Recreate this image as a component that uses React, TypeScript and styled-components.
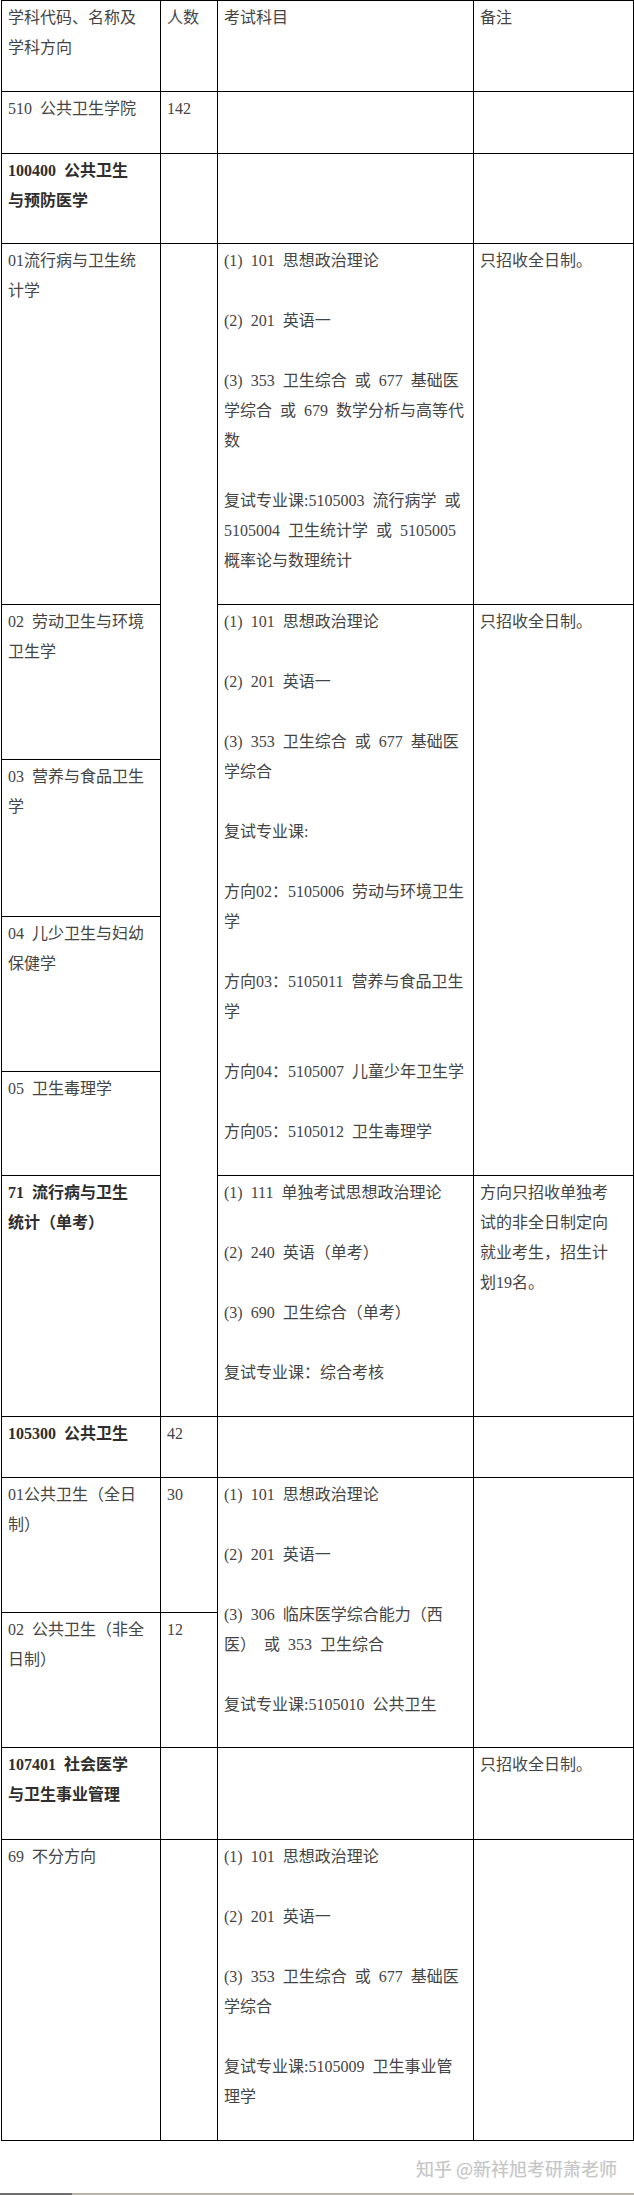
import React from 'react';
import styled, { createGlobalStyle } from 'styled-components';

const GlobalStyle = createGlobalStyle`
  html, body {
    margin: 0;
    padding: 0;
    background: #fff;
  }
  body {
    font-family: "Liberation Serif", "Noto Sans CJK SC", serif;
  }
`;

const Page = styled.div`
  width: 634px;
  height: 2195px;
  display: flex;
  flex-direction: column;
  overflow: hidden;
`;

const Table = styled.table`
  margin-left: 1px;
  width: 632px;
  border-collapse: collapse;
  table-layout: fixed;
  font-size: 16px;
  line-height: 30px;
  color: #444;
  word-spacing: 4px;
`;

const Row = styled.tr<{ $h: number }>`
  height: ${(p) => p.$h}px;
`;

const Cell = styled.td<{ $bold?: boolean }>`
  border: 1px solid #000;
  vertical-align: top;
  padding: 2px 2px 0 6px;
  white-space: pre;
  overflow: hidden;
  font-weight: ${(p) => (p.$bold ? 700 : 400)};
  color: ${(p) => (p.$bold ? '#2e2e2e' : '#444')};
`;

const Para = styled.p`
  margin: 0 0 30px;

  &:last-child {
    margin-bottom: 0;
  }
`;

const Footer = styled.div`
  flex: 1;
  display: flex;
  flex-direction: column;
  justify-content: flex-end;
`;

const Watermark = styled.div`
  align-self: flex-end;
  margin: 0 17px 13px 0;
  font-family: "Noto Sans CJK SC", sans-serif;
  font-size: 18px;
  line-height: 24px;
  color: #c6c6c6;
  text-shadow: 0 0 1px #e2e2e2;
`;

const BottomRule = styled.div`
  height: 2px;
  background: linear-gradient(to right, #6f6f6f 0 72px, #b9b4aa 72px 100%);
`;

type Paras = string[][];

const Text = ({ paras }: { paras: Paras }) => (
  <>
    {paras.map((lines, i) => (
      <Para key={i}>
        {lines.map((line, j) => (
          <React.Fragment key={j}>
            {j > 0 && <br />}
            {line}
          </React.Fragment>
        ))}
      </Para>
    ))}
  </>
);

const exam01: Paras = [
  ['(1) 101 思想政治理论'],
  ['(2) 201 英语一'],
  ['(3) 353 卫生综合 或 677 基础医', '学综合 或 679 数学分析与高等代', '数'],
  ['复试专业课:5105003 流行病学 或', '5105004 卫生统计学 或 5105005', '概率论与数理统计'],
];

const exam02: Paras = [
  ['(1) 101 思想政治理论'],
  ['(2) 201 英语一'],
  ['(3) 353 卫生综合 或 677 基础医', '学综合'],
  ['复试专业课:'],
  ['方向02：5105006 劳动与环境卫生', '学'],
  ['方向03：5105011 营养与食品卫生', '学'],
  ['方向04：5105007 儿童少年卫生学'],
  ['方向05：5105012 卫生毒理学'],
];

const exam71: Paras = [
  ['(1) 111 单独考试思想政治理论'],
  ['(2) 240 英语（单考）'],
  ['(3) 690 卫生综合（单考）'],
  ['复试专业课：综合考核'],
];

const examPublic: Paras = [
  ['(1) 101 思想政治理论'],
  ['(2) 201 英语一'],
  ['(3) 306 临床医学综合能力（西', '医） 或 353 卫生综合'],
  ['复试专业课:5105010 公共卫生'],
];

const exam69: Paras = [
  ['(1) 101 思想政治理论'],
  ['(2) 201 英语一'],
  ['(3) 353 卫生综合 或 677 基础医', '学综合'],
  ['复试专业课:5105009 卫生事业管', '理学'],
];

const FULL_TIME = [['只招收全日制。']];

export default function App() {
  return (
    <Page>
      <GlobalStyle />
      <Table>
        <colgroup>
          <col style={{ width: 159 }} />
          <col style={{ width: 57 }} />
          <col style={{ width: 256 }} />
          <col style={{ width: 160 }} />
        </colgroup>
        <tbody>
          <Row $h={91}>
            <Cell><Text paras={[['学科代码、名称及', '学科方向']]} /></Cell>
            <Cell><Text paras={[['人数']]} /></Cell>
            <Cell><Text paras={[['考试科目']]} /></Cell>
            <Cell><Text paras={[['备注']]} /></Cell>
          </Row>
          <Row $h={62}>
            <Cell><Text paras={[['510 公共卫生学院']]} /></Cell>
            <Cell><Text paras={[['142']]} /></Cell>
            <Cell />
            <Cell />
          </Row>
          <Row $h={90}>
            <Cell $bold><Text paras={[['100400 公共卫生', '与预防医学']]} /></Cell>
            <Cell />
            <Cell />
            <Cell />
          </Row>
          <Row $h={361}>
            <Cell><Text paras={[['01流行病与卫生统', '计学']]} /></Cell>
            <Cell rowSpan={6} />
            <Cell><Text paras={exam01} /></Cell>
            <Cell><Text paras={FULL_TIME} /></Cell>
          </Row>
          <Row $h={155}>
            <Cell><Text paras={[['02 劳动卫生与环境', '卫生学']]} /></Cell>
            <Cell rowSpan={4}><Text paras={exam02} /></Cell>
            <Cell rowSpan={4}><Text paras={FULL_TIME} /></Cell>
          </Row>
          <Row $h={157}>
            <Cell><Text paras={[['03 营养与食品卫生', '学']]} /></Cell>
          </Row>
          <Row $h={155}>
            <Cell><Text paras={[['04 儿少卫生与妇幼', '保健学']]} /></Cell>
          </Row>
          <Row $h={104}>
            <Cell><Text paras={[['05 卫生毒理学']]} /></Cell>
          </Row>
          <Row $h={241}>
            <Cell $bold><Text paras={[['71 流行病与卫生', '统计（单考）']]} /></Cell>
            <Cell><Text paras={exam71} /></Cell>
            <Cell>
              <Text paras={[['方向只招收单独考', '试的非全日制定向', '就业考生，招生计', '划19名。']]} />
            </Cell>
          </Row>
          <Row $h={61}>
            <Cell $bold><Text paras={[['105300 公共卫生']]} /></Cell>
            <Cell><Text paras={[['42']]} /></Cell>
            <Cell />
            <Cell />
          </Row>
          <Row $h={135}>
            <Cell><Text paras={[['01公共卫生（全日', '制）']]} /></Cell>
            <Cell><Text paras={[['30']]} /></Cell>
            <Cell rowSpan={2}><Text paras={examPublic} /></Cell>
            <Cell rowSpan={2} />
          </Row>
          <Row $h={135}>
            <Cell><Text paras={[['02 公共卫生（非全', '日制）']]} /></Cell>
            <Cell><Text paras={[['12']]} /></Cell>
          </Row>
          <Row $h={92}>
            <Cell $bold><Text paras={[['107401 社会医学', '与卫生事业管理']]} /></Cell>
            <Cell />
            <Cell />
            <Cell><Text paras={FULL_TIME} /></Cell>
          </Row>
          <Row $h={301}>
            <Cell><Text paras={[['69 不分方向']]} /></Cell>
            <Cell />
            <Cell><Text paras={exam69} /></Cell>
            <Cell />
          </Row>
        </tbody>
      </Table>
      <Footer>
        <Watermark>知乎 @新祥旭考研萧老师</Watermark>
        <BottomRule />
      </Footer>
    </Page>
  );
}
